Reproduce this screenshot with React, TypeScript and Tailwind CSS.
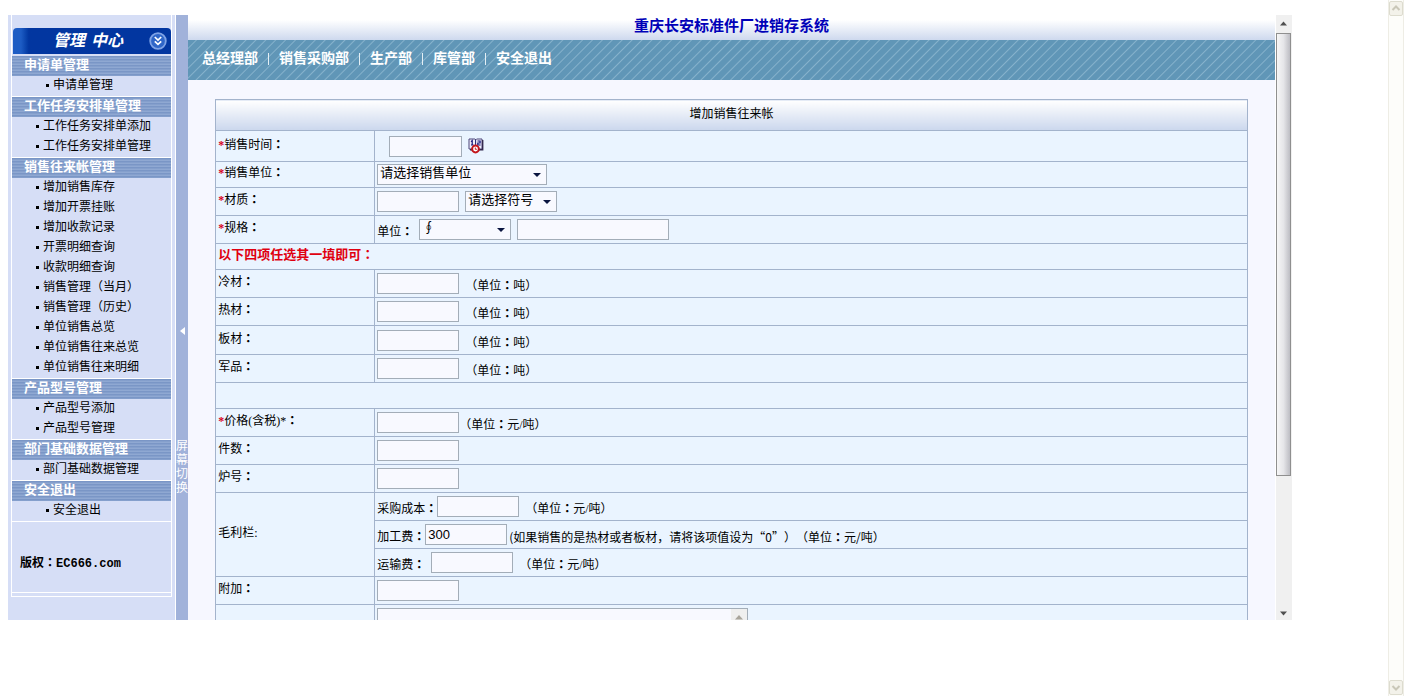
import React from "react";

type MenuGroup = { title: string; items: string[]; deep?: boolean };

const menu: MenuGroup[] = [
  { title: "申请单管理", items: ["申请单管理"], deep: true },
  { title: "工作任务安排单管理", items: ["工作任务安排单添加", "工作任务安排单管理"] },
  {
    title: "销售往来帐管理",
    items: [
      "增加销售库存",
      "增加开票挂账",
      "增加收款记录",
      "开票明细查询",
      "收款明细查询",
      "销售管理（当月）",
      "销售管理（历史）",
      "单位销售总览",
      "单位销售往来总览",
      "单位销售往来明细",
    ],
  },
  { title: "产品型号管理", items: ["产品型号添加", "产品型号管理"] },
  { title: "部门基础数据管理", items: ["部门基础数据管理"] },
  { title: "安全退出", items: ["安全退出"], deep: true },
];

const navItems = ["总经理部", "销售采购部", "生产部", "库管部", "安全退出"];

const fieldStyle =
  "h-[21px] border border-[#a3adb8] bg-[#f8f9ff] px-0.5 text-[13px] leading-4 text-black outline-none font-['Liberation_Sans','Noto_Sans_CJK_SC',sans-serif]";

/* Sets full-width colons in the middle of their cell. */
function Text({ children }: { children: string }) {
  return (
    <>
      {children.split(/(：)/).map((part, i) =>
        part === "：" ? (
          <span key={i} lang="zh-Hant" className="font-['Noto_Sans_CJK_TC',sans-serif] font-bold">
            ：
          </span>
        ) : (
          part
        ),
      )}
    </>
  );
}

function TextField({ id, label, value, width = "w-[82px]" }: { id: string; label?: string; value?: string; width?: string }) {
  return <input id={id} aria-label={label} type="text" defaultValue={value} className={`${fieldStyle} ${width} shrink-0`} />;
}

function SelectField({ id, label, option, width }: { id: string; label?: string; option: string; width: string }) {
  return (
    <span className={`relative block shrink-0 ${width}`}>
      <select id={id} aria-label={label} className={`${fieldStyle} block w-full appearance-none pb-1`}>
        <option>{option}</option>
      </select>
      <svg className="pointer-events-none absolute right-1.5 top-[9px]" width="8" height="4" viewBox="0 0 8 4" aria-hidden="true">
        <path d="M0 0h8L4 4z" fill="#0a1540" />
      </svg>
    </span>
  );
}

function CalendarIcon() {
  return (
    <svg width="16" height="16" viewBox="0 0 16 16" aria-hidden="true">
      <path d="M1 1h6l.8.8L8.6 1H14v10H1z" fill="#f0eefb" stroke="#4a4478" strokeWidth="1" />
      <path d="M14.7 2v9.8H2" fill="none" stroke="#33284e" strokeWidth="1.4" />
      <path d="M7.6 1.5v7" stroke="#1b1c66" strokeWidth="1" />
      <path d="M3 3.6l1.2-1V7M3 7h2.6M9.5 3h2.6v2H9.8v2h2.8" fill="none" stroke="#14157a" strokeWidth="1.2" />
      <circle cx="7.5" cy="11" r="3.4" fill="#fff" stroke="#c4161c" strokeWidth="2" />
      <path d="M7.3 9.5v1.8h1.5" fill="none" stroke="#c4161c" strokeWidth="1" />
    </svg>
  );
}

function Star() {
  return <span className="font-bold text-[#d80020]">*</span>;
}

function Row({ id, label, required, tall, children }: { id: string; label: string; required?: boolean; tall?: string; children: React.ReactNode }) {
  return (
    <tr className={tall ?? "h-7"}>
      <th scope="row" className="w-[159px] border border-[#a3b3cc] px-0.5 pb-1 text-left font-normal">
        <label htmlFor={id}>
          {required && <Star />}
          <Text>{label}</Text>
        </label>
      </th>
      <td className="border border-[#a3b3cc] px-0.5">
        <div className="flex items-center">{children}</div>
      </td>
    </tr>
  );
}

function Sidebar() {
  return (
    <aside className="w-[168px] shrink-0 border-r border-white bg-[#d6def6] px-[3px]">
      <div className="border-x border-b border-white pb-[3px] pt-[13px]">
        <button
          type="button"
          className="mb-0.5 ml-px flex h-[26px] w-[158px] items-center justify-end rounded-t bg-gradient-to-r from-[#1d5cc4] from-5% via-[#0236a0] via-10% to-[#0236a0] pr-1 text-white"
        >
          <span className="flex gap-1.5 pr-[26px] text-base font-bold italic leading-6">
            <span>管理</span>
            <span>中心</span>
          </span>
          <svg width="18" height="18" viewBox="0 0 18 18" aria-hidden="true">
            <circle cx="9" cy="9" r="7.8" fill="#2f66c8" stroke="#7fa3e6" strokeWidth="1.8" />
            <path d="M5.8 5l3.2 3 3.2-3M5.8 9.3l3.2 3 3.2-3" fill="none" stroke="#fff" strokeWidth="1.7" />
          </svg>
        </button>
        <nav>
          {menu.map((group) => (
            <section key={group.title} className="border-b border-white">
              <h2 className="h-5 bg-[repeating-linear-gradient(to_bottom,#7a96c6_0px,#7a96c6_1px,#8fa8d2_2px,#8fa8d2_3px)] pl-3 text-[13px] font-bold leading-[18px] text-white">
                {group.title}
              </h2>
              <ul className={group.deep ? "pl-[34px]" : "pl-6"}>
                {group.items.map((item) => (
                  <li key={item} className="flex h-5 items-center gap-1 whitespace-nowrap pb-0.5">
                    <span className="size-[3px] bg-black" />
                    <a href="#">{item}</a>
                  </li>
                ))}
              </ul>
            </section>
          ))}
        </nav>
        <p className="flex h-[71px] items-center border-b border-white pl-2 pt-3 font-['Liberation_Mono','Noto_Sans_CJK_SC',monospace] font-bold">
          <span>
            <Text>版权：EC666.com</Text>
          </span>
        </p>
      </div>
    </aside>
  );
}

function FrameScrollbar() {
  return (
    <div className="ml-px flex w-4 shrink-0 flex-col items-center bg-[#f0f0f0]" aria-hidden="true">
      <svg width="16" height="18" viewBox="0 0 16 18">
        <path d="M4 10.5h7L7.5 6.5z" fill="#505050" />
      </svg>
      <div className="h-[443px] w-[15px] self-start border border-[#8f8f8f] bg-gradient-to-r from-[#f6f6f6] via-[#e6e6e9] to-[#bdbdc3]" />
      <svg className="mt-auto" width="16" height="16" viewBox="0 0 16 16">
        <path d="M4 7.5h7l-3.5 4z" fill="#505050" />
      </svg>
    </div>
  );
}

function PageScrollbar() {
  return (
    <div className="mr-0.5 flex w-4 shrink-0 flex-col items-center justify-between border-x border-[#eeede5] bg-[#fdfdfa]" aria-hidden="true">
      <svg width="14" height="17" viewBox="0 0 14 17">
        <rect x=".5" y="1.5" width="13" height="14" rx="1.5" fill="#f3f2ea" stroke="#dddccf" />
        <path d="M3.5 10L7 6.5l3.5 3.5" fill="none" stroke="#c9c7b8" strokeWidth="2" />
      </svg>
      <svg width="14" height="17" viewBox="0 0 14 17">
        <rect x=".5" y="1.5" width="13" height="14" rx="1.5" fill="#f3f2ea" stroke="#dddccf" />
        <path d="M3.5 7L7 10.5 10.5 7" fill="none" stroke="#c9c7b8" strokeWidth="2" />
      </svg>
    </div>
  );
}

function Unit({ children }: { children: string }) {
  return (
    <span className="whitespace-nowrap pt-1">
      <Text>{children}</Text>
    </span>
  );
}

function SalesForm() {
  return (
    <form>
      <table className="mx-auto w-[95%] border-collapse bg-[#eaf4ff] text-left">
        <thead>
          <tr className="h-[31px]">
            <th colSpan={2} className="border border-[#a3b3cc] bg-gradient-to-b from-white to-[#cbd7ed] pb-0.5 text-center font-normal">
              增加销售往来帐
            </th>
          </tr>
        </thead>
        <tbody>
          <Row id="date" label="销售时间：" required tall="h-[31px]">
            <span className="flex items-center gap-1.5 pl-3">
              <TextField id="date" width="w-[73px]" />
              <button type="button" aria-label="选择日期">
                <CalendarIcon />
              </button>
            </span>
          </Row>
          <Row id="company" label="销售单位：" required tall="h-[26px]">
            <SelectField id="company" option="请选择销售单位" width="w-[170px]" />
          </Row>
          <Row id="material" label="材质：" required>
            <span className="flex gap-1.5">
              <TextField id="material" />
              <SelectField id="symbol" label="符号" option="请选择符号" width="w-[92px]" />
            </span>
          </Row>
          <Row id="spec" label="规格：" required>
            <span className="flex items-center gap-1.5">
              <Unit>单位：</Unit>
              <SelectField id="spec-unit" label="单位" option="∮" width="w-[92px]" />
              <TextField id="spec" width="w-[152px]" />
            </span>
          </Row>
          <tr className="h-[26px]">
            <td colSpan={2} className="border border-[#a3b3cc] px-0.5 pb-1 text-[13px] font-bold text-[#e00010]">
              <Text>以下四项任选其一填即可：</Text>
            </td>
          </tr>
          {["冷材", "热材", "板材", "军品"].map((name) => (
            <Row key={name} id={name} label={`${name}：`} tall={name === "板材" ? "h-[29px]" : "h-7"}>
              <span className="flex items-center gap-1.5">
                <TextField id={name} />
                <Unit>（单位：吨）</Unit>
              </span>
            </Row>
          ))}
          <tr className="h-[26px]">
            <td colSpan={2} className="border border-[#a3b3cc]" />
          </tr>
          <Row id="price" label="价格(含税)*：" required>
            <TextField id="price" />
            <Unit>（单位：元/吨）</Unit>
          </Row>
          <Row id="count" label="件数：">
            <TextField id="count" />
          </Row>
          <Row id="furnace" label="炉号：">
            <TextField id="furnace" />
          </Row>
          <tr className="h-7">
            <th scope="rowgroup" rowSpan={3} className="w-[159px] border border-[#a3b3cc] px-0.5 pb-1 text-left font-normal">
              毛利栏:
            </th>
            <td className="border border-[#a3b3cc] px-0.5">
              <div className="flex items-center">
                <label htmlFor="cost" className="pt-1">
                  <Text>采购成本：</Text>
                </label>
                <span className="flex items-center gap-1.5">
                  <TextField id="cost" />
                  <Unit>（单位：元/吨）</Unit>
                </span>
              </div>
            </td>
          </tr>
          <tr className="h-7">
            <td className="border border-[#a3b3cc] px-0.5">
              <div className="flex items-center">
                <label htmlFor="processing" className="pt-1">
                  <Text>加工费：</Text>
                </label>
                <TextField id="processing" value="300" />
                <span className="whitespace-nowrap pl-0.5 pt-1 font-['Noto_Sans_CJK_SC',sans-serif] [text-spacing-trim:space-all]">
                  <Text>(如果销售的是热材或者板材，请将该项值设为“0”）（单位：元/吨）</Text>
                </span>
              </div>
            </td>
          </tr>
          <tr className="h-7">
            <td className="border border-[#a3b3cc] px-0.5">
              <div className="flex items-center gap-1.5">
                <label htmlFor="freight" className="pt-1">
                  <Text>运输费：</Text>
                </label>
                <TextField id="freight" />
                <Unit>（单位：元/吨）</Unit>
              </div>
            </td>
          </tr>
          <Row id="extra" label="附加：">
            <TextField id="extra" />
          </Row>
          <tr>
            <td className="border border-[#a3b3cc]" />
            <td className="border border-[#a3b3cc] px-0.5 py-[3px]">
              <div className="relative w-[371px]">
                <textarea aria-label="备注" className="block h-20 w-full resize-none border border-[#a3adb8] bg-[#f8f9ff] outline-none" />
                <span className="absolute inset-y-px right-px w-4 bg-[#efefef]" aria-hidden="true">
                  <svg width="16" height="16" viewBox="0 0 16 16">
                    <path d="M4 10.5h8L8 6z" fill="#a9a59c" />
                  </svg>
                </span>
              </div>
            </td>
          </tr>
        </tbody>
      </table>
    </form>
  );
}

export default function App() {
  return (
    <div className="flex h-screen bg-white font-['Liberation_Serif','Noto_Sans_CJK_SC',serif] text-xs leading-4 text-black" lang="zh-CN">
      <div className="min-w-0 flex-1 pl-2 pr-24 pt-[15px]">
        <div className="flex h-[605px] overflow-hidden">
          <Sidebar />
          <button type="button" className="flex w-3 shrink-0 flex-col items-center bg-[#a1b2da] text-white">
            <svg className="mt-[312px]" width="5" height="8" viewBox="0 0 5 8" aria-hidden="true">
              <path d="M5 0v8L0 4z" fill="#fff" />
            </svg>
            <span className="mt-[104px] w-3 break-all leading-[14px]">屏幕切换</span>
          </button>
          <main className="min-w-0 flex-1 bg-[#f6f7ff]">
            <h1 className="h-[25px] bg-gradient-to-b from-white from-20% to-[#ced9ee] text-center text-[15px] font-bold leading-[22px] text-[#0000b8]">
              重庆长安标准件厂进销存系统
            </h1>
            <nav className="mb-[19px] flex h-10 items-center gap-2.5 bg-[#6398b9] bg-[repeating-linear-gradient(135deg,#6096b7_0px,#6096b7_5px,#86b2cc_6px,#6096b7_7px)] pb-0.5 pl-3.5 text-sm font-bold text-white">
              {navItems.map((item, i) => (
                <React.Fragment key={item}>
                  {i > 0 && <span className="h-3 w-px bg-[#e4eff5]" />}
                  <a href="#">{item}</a>
                </React.Fragment>
              ))}
            </nav>
            <SalesForm />
          </main>
          <FrameScrollbar />
        </div>
      </div>
      <PageScrollbar />
    </div>
  );
}
